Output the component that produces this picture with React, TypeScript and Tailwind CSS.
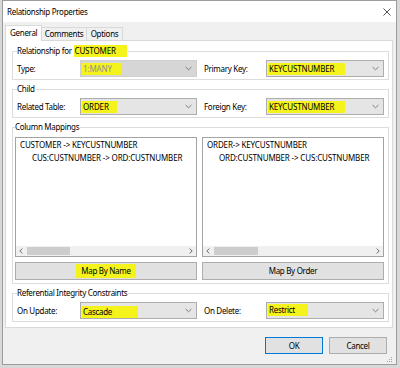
import React from "react";

const YEL = "bg-[#f4f41c]";
const UP = "tracking-[-0.15px]";

function Chevron() {
  return (
    <svg width="7" height="5" viewBox="0 0 7 5" className="shrink-0">
      <path d="M0.6 1 L3.5 3.8 L6.4 1" fill="none" stroke="#707070" strokeWidth="0.9" />
    </svg>
  );
}

function Combo({ children, disabled }: { children: React.ReactNode; disabled?: boolean }) {
  return (
    <div
      className={`h-[17px] flex items-center justify-between border pl-[1px] pr-[4px] ${
        disabled ? "border-[#cfcfcf] bg-[#d6d6d6] text-[#8f8f8f]" : "border-[#adadad] bg-[#e5e5e5] text-black"
      }`}
    >
      <div className="flex items-center">{children}</div>
      <Chevron />
    </div>
  );
}

function Hl({ w, children, cls = "" }: { w: string; children: React.ReactNode; cls?: string }) {
  return <span className={`inline-block ${w} h-[12px] leading-[12px] pl-[1px] ${YEL} ${cls}`}>{children}</span>;
}

function Group({ legend, children, cls = "" }: { legend: React.ReactNode; children: React.ReactNode; cls?: string }) {
  return (
    <fieldset className={`border border-[#dcdcdc] ml-[6px] mr-[3px] px-[4px] ${cls}`}>
      <legend className="leading-[12px] h-[12px] pr-[1px]">{legend}</legend>
      {children}
    </fieldset>
  );
}

function Row({ children }: { children: React.ReactNode }) {
  return <div className="grid grid-cols-[63px_117px_7px_62px_118px] items-center">{children}</div>;
}

function ScrollBar({ thumbW }: { thumbW: string }) {
  return (
    <div className="h-[10px] bg-[#f0f0f0] flex items-center shrink-0">
      <div className="w-[10px] flex justify-center">
        <svg width="4" height="6" viewBox="0 0 4 6">
          <path d="M3.4 0.6 L0.8 3 L3.4 5.4" fill="none" stroke="#606060" strokeWidth="0.9" />
        </svg>
      </div>
      <div className={`ml-[1px] ${thumbW} h-[8px] bg-[#cdcdcd]`} />
      <div className="flex-1" />
      <div className="w-[10px] flex justify-center">
        <svg width="4" height="6" viewBox="0 0 4 6">
          <path d="M0.6 0.6 L3.2 3 L0.6 5.4" fill="none" stroke="#606060" strokeWidth="0.9" />
        </svg>
      </div>
    </div>
  );
}

function ListBox({ line1, line2, thumbW }: { line1: string; line2: string; thumbW: string }) {
  return (
    <div className="h-[120px] border border-[#a3a3a3] bg-white flex flex-col">
      <div className={`flex-1 leading-[13px] whitespace-nowrap ${UP}`}>
        <div className="pl-[4px]">{line1}</div>
        <div className="pl-[16px]">{line2}</div>
      </div>
      <ScrollBar thumbW={thumbW} />
    </div>
  );
}

function Btn({ children, cls = "" }: { children: React.ReactNode; cls?: string }) {
  return (
    <div className={`flex items-center justify-center border border-[#adadad] bg-[#e1e1e1] ${cls}`}>{children}</div>
  );
}

export default function App() {
  return (
    <div
      className="w-[400px] h-[368px] bg-[#d8d8d8] text-[8px] tracking-[-0.3px] text-black"
      style={{ fontFamily: '"Noto Sans", "Open Sans", sans-serif' }}
    >
      <div className="ml-[2px] w-[395px] h-[365px] border border-[#9c9c9c] bg-[#f0f0f0] flex flex-col">
        {/* Title bar */}
        <div className="h-[21px] bg-white flex items-center justify-between pl-[4px] pr-[5px] shrink-0">
          <span>Relationship Properties</span>
          <svg width="8" height="8" viewBox="0 0 8 8">
            <path d="M0.5 0.5 L7.5 7.5 M7.5 0.5 L0.5 7.5" stroke="#404040" strokeWidth="0.9" />
          </svg>
        </div>

        <div className="flex flex-col pl-[2px] pr-[3px] pt-[3px] flex-1">
          {/* Tabs */}
          <div className="flex items-end h-[15px] relative z-10">
            <div className="w-[37px] h-[16px] mb-[-1px] bg-white border border-b-0 border-[#d9d9d9] pl-[4px] leading-[14px]">
              General
            </div>
            <div className="w-[45px] h-[13px] border border-l-0 border-b-0 border-[#d9d9d9] bg-[#f0f0f0] flex items-center justify-center leading-[12px]">
              Comments
            </div>
            <div className="w-[36px] h-[13px] border border-l-0 border-b-0 border-[#d9d9d9] bg-[#f0f0f0] flex items-center justify-center leading-[12px]">
              Options
            </div>
          </div>

          {/* Panel */}
          <div className="h-[288px] bg-white border border-[#d9d9d9] pt-[4px] flex flex-col">
            <Group
              legend={
                <span className="flex items-center">
                  <span>Relationship for&nbsp;</span>
                  <Hl w="w-[53px]" cls={`pl-0 ${UP}`}>CUSTOMER</Hl>
                </span>
              }
            >
              <div className="mt-[3px] pb-[2px]">
                <Row>
                  <span>Type:</span>
                  <Combo disabled>
                    <Hl w="w-[39px]" cls={`bg-[#e4e43a] ${UP}`}>1:MANY</Hl>
                  </Combo>
                  <span />
                  <span>Primary Key:</span>
                  <Combo>
                    <Hl w="w-[77px]" cls={UP}>KEYCUSTNUMBER</Hl>
                  </Combo>
                </Row>
              </div>
            </Group>

            <Group legend={<span>Child</span>} cls="mt-[3px]">
              <div className="mt-[3px] pb-[2px]">
                <Row>
                  <span>Related Table:</span>
                  <Combo>
                    <Hl w="w-[35px]" cls={UP}>ORDER</Hl>
                  </Combo>
                  <span />
                  <span>Foreign Key:</span>
                  <Combo>
                    <Hl w="w-[77px]" cls={UP}>KEYCUSTNUMBER</Hl>
                  </Combo>
                </Row>
              </div>
            </Group>

            <Group legend={<span>Column Mappings</span>} cls="mt-[3px] !pl-[2px] !pr-[4px]">
              <div className="mt-[4px] pb-[3px] grid grid-cols-[182px_182px] gap-x-[5px]">
                <ListBox
                  line1="CUSTOMER -> KEYCUSTNUMBER"
                  line2="CUS:CUSTNUMBER -> ORD:CUSTNUMBER"
                  thumbW="w-[43px]"
                />
                <ListBox
                  line1="ORDER-> KEYCUSTNUMBER"
                  line2="ORD:CUSTNUMBER -> CUS:CUSTNUMBER"
                  thumbW="w-[44px]"
                />
                <Btn cls="h-[18px] mt-[5px]">
                  <span className={`inline-block w-[60px] h-[14px] leading-[14px] text-center ${YEL}`}>Map By Name</span>
                </Btn>
                <Btn cls="h-[18px] mt-[5px]">Map By Order</Btn>
              </div>
            </Group>

            <Group legend={<span>Referential Integrity Constraints</span>} cls="mt-[3px]">
              <div className="mt-[3px] pb-[2px]">
                <Row>
                  <span>On Update:</span>
                  <Combo>
                    <Hl w="w-[56px]" cls="mt-[3px]">Cascade</Hl>
                  </Combo>
                  <span />
                  <span>On Delete:</span>
                  <Combo>
                    <Hl w="w-[40px]" cls="mb-[1px]">Restrict</Hl>
                  </Combo>
                </Row>
              </div>
            </Group>
          </div>

          {/* Buttons */}
          <div className="flex justify-end gap-[6px] pr-[6px] mt-[9px]">
            <div className="w-[58px] h-[17px] border border-[#0078d7] bg-[#e1e1e1] flex items-center justify-center">OK</div>
            <div className="w-[58px] h-[17px] border border-[#adadad] bg-[#e1e1e1] flex items-center justify-center">Cancel</div>
          </div>
          <div className="flex-1 flex items-end justify-end pb-[1px]">
            <svg width="6" height="6" viewBox="0 0 6 6">
              <rect x="4" y="0" width="1" height="1" fill="#a0a0a0" />
              <rect x="2" y="2" width="1" height="1" fill="#a0a0a0" />
              <rect x="4" y="2" width="1" height="1" fill="#a0a0a0" />
              <rect x="0" y="4" width="1" height="1" fill="#a0a0a0" />
              <rect x="2" y="4" width="1" height="1" fill="#a0a0a0" />
              <rect x="4" y="4" width="1" height="1" fill="#a0a0a0" />
            </svg>
          </div>
        </div>
      </div>
    </div>
  );
}
